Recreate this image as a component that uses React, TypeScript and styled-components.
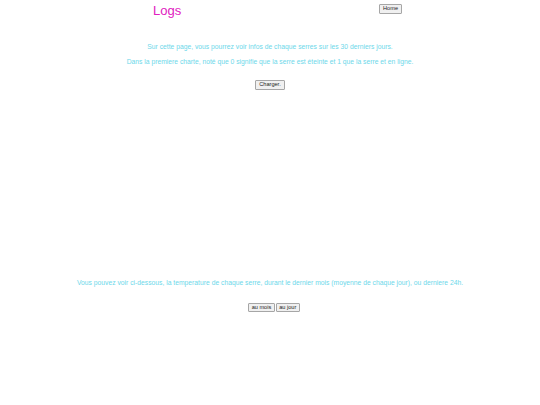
import React from "react";
import styled, { createGlobalStyle } from "styled-components";

const Global = createGlobalStyle`
  html, body { margin: 0; padding: 0; background: #fff; }
  body { font-family: "Liberation Sans", Arial, sans-serif; }
`;

const Page = styled.div`
  width: 540px;
  display: flex;
  flex-direction: column;
  align-items: center;
`;

const Header = styled.header`
  width: 100%;
  display: flex;
  align-items: flex-start;
  justify-content: space-between;
  padding: 0 138px 0 153px;
  box-sizing: border-box;
`;

const Title = styled.h1`
  margin: 3px 0 0;
  font-size: 13px;
  font-weight: normal;
  color: #e020c0;
`;

const Btn = styled.button<{ $m?: string; $px?: number }>`
  font-family: "Liberation Sans", Arial, sans-serif;
  font-size: 5.6px;
  color: #222;
  background: #f0f0f0;
  border: 1px solid #a6a6a6;
  border-radius: 1px;
  padding: 1px ${(p) => p.$px ?? 3}px;
  line-height: 1;
  margin: ${(p) => p.$m || "0"};
`;

const Info = styled.p<{ $m: string }>`
  margin: ${(p) => p.$m};
  font-size: 6.75px;
  color: #6dd8ea;
  text-align: center;
`;

const Chart = styled.div`
  height: 189px;
`;

const Group = styled.div`
  display: flex;
  gap: 1px;
  margin: 17px 0 0 8px;
`;

export default function App() {
  return (
    <Page>
      <Global />
      <Header>
        <Title>Logs</Title>
        <Btn $m="4px 0 0">Home</Btn>
      </Header>
      <Info $m="25px 0 0">Sur cette page, vous pourrez voir infos de chaque serres sur les 30 derniers jours.</Info>
      <Info $m="8px 0 0">Dans la premiere charte, noté que 0 signifie que la serre est éteinte et 1 que la serre et en ligne.</Info>
      <Btn $m="15px 0 0">Charger.</Btn>
      <Chart />
      <Info $m="0">Vous pouvez voir ci-dessous, la temperature de chaque serre, durant le dernier mois (moyenne de chaque jour), ou derniere 24h.</Info>
      <Group>
        <Btn $px={2.5}>au mois</Btn>
        <Btn $px={2.5}>au jour</Btn>
      </Group>
    </Page>
  );
}
